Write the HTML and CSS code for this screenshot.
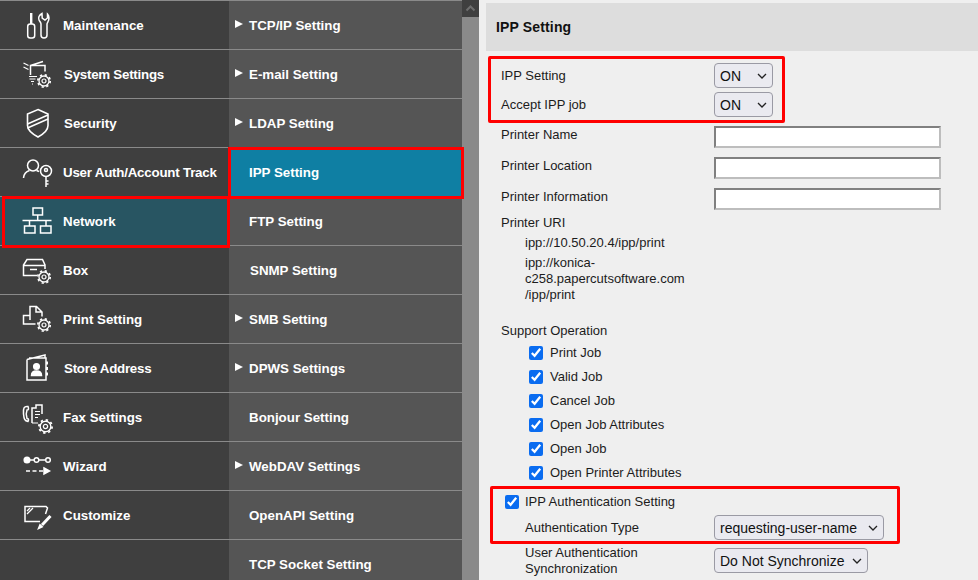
FILE: index.html
```html
<!DOCTYPE html>
<html lang="en">
<head>
<meta charset="utf-8">
<title>IPP Setting</title>
<link rel="stylesheet" href="styles.css">
</head>
<body>
<svg class="defs" width="0" height="0" aria-hidden="true">
  <symbol id="gear" viewBox="-8 -8 16 16">
    <circle r="5" fill="none" stroke="#fff" stroke-width="1.3"/>
    <circle r="6.2" fill="none" stroke="#fff" stroke-width="1.7" stroke-dasharray="2.2 2.67"/>
    <circle r="2" fill="none" stroke="#fff" stroke-width="1.2"/>
  </symbol>
</svg>
<div class="app">
  <nav class="menu">
    <a class="menu-item"><svg class="ico" viewBox="0 0 32 32"><rect x="5.700" y="15" width="7" height="14" rx="2.500"/><path d="M9.200 4v11" stroke-width="2.400"/><path d="M20 4.500C17 6 16 9 17 11c1 2 2 2.500 2 4v11a3 3 0 0 0 6 0V15c0-1.500 2-2.500 2-6 0-2-.5-3-1.500-4v4L23 11l-2.800-2z"/></svg><span>Maintenance</span></a>
    <a class="menu-item nudge"><svg class="ico" viewBox="0 0 32 32"><path d="M8.500 17V7.500H23v6M8.500 7.500L21 3.500"/><path d="M1.500 5l5 2.500M1.500 9l5 2.500" stroke-width="1.300"/><path d="M7 18.500h8M7.500 21h6M9 23.500h3M10 26h1" stroke-width="1.200"/><use href="#gear" x="14" y="15" width="16" height="16"/></svg><span class="tight">System Settings</span></a>
    <a class="menu-item nudge"><svg class="ico" viewBox="0 0 32 32"><path d="M16 2.500L26 7v11.500c0 4-4.500 8.500-10 11.500C10.500 27 5.500 22.500 5.500 18.500V7z" stroke-width="1.600"/><path d="M5.500 17L26 8M5.500 21L26 12" stroke-width="1.400"/></svg><span>Security</span></a>
    <a class="menu-item"><svg class="ico" viewBox="0 0 32 32"><circle cx="11" cy="9.500" r="5.500"/><path d="M1.500 22c.3-4 2.700-6.500 6-7.500M14.500 14.500c1 .3 1.800.7 2.500 1.200"/><circle cx="24" cy="15" r="5.500"/><circle cx="24" cy="14" r="1.500"/><path d="M24 20.500V31M24 25h2.500M24 28h2.500"/></svg><span class="tighter">User Auth/Account Track</span></a>
    <a class="menu-item active"><svg class="ico" viewBox="0 0 32 32"><rect x="11" y="3" width="9.500" height="7"/><path d="M15.700 10v5M.5 15.500h29M7.500 15.500V21M24 15.500V21"/><rect x="2.500" y="21" width="10.500" height="7"/><rect x="18.500" y="21" width="10.500" height="7"/></svg><span>Network</span></a>
    <a class="menu-item"><svg class="ico" viewBox="0 0 32 32"><path d="M15 21.500H1.500V11L5 5.500h15.500L23 11v4M1.500 11.500h21.500M8 15.500h7" stroke-width="1.500"/><use href="#gear" x="14" y="15" width="16" height="16"/></svg><span>Box</span></a>
    <a class="menu-item"><svg class="ico" viewBox="0 0 32 32"><path d="M8 17V3.500h6.500L20 9v4.500M14 3.500V9h6"/><path d="M8 12.500H1.500V21h12"/><use href="#gear" x="14" y="14" width="16" height="16"/></svg><span>Print Setting</span></a>
    <a class="menu-item nudge"><svg class="ico" viewBox="0 0 32 32"><path d="M5 7.500L23 3v3M5 7.500V28h19V6H7"/><circle cx="14.500" cy="14.500" r="2.800" fill="#fff"/><path d="M9.500 23.500c0-3.500 2-4.500 5-4.500s5 1 5 4.500z" fill="#fff"/><path d="M25 9.500v3M25 15v3M25 20.500v3" stroke-width="2"/></svg><span class="tight">Store Address</span></a>
    <a class="menu-item"><svg class="ico" viewBox="0 0 32 32"><path d="M6 5.500C2 5 1 7 1.500 13c.5 5 1 7 4.500 7.500 1-2 .5-3-1-3-1-3-1-6 0-8.500 1.500 0 2-1 1-3.500z"/><path d="M10 22V7h4V4h6v9"/><path d="M13 10.500h5M13 13.500h5M13 16.500h3M10 22h6" stroke-width="1.200"/><use href="#gear" x="15" y="17" width="17" height="17"/></svg><span>Fax Settings</span></a>
    <a class="menu-item"><svg class="ico" viewBox="0 0 32 32"><circle cx="5" cy="10" r="2.800" fill="#fff"/><circle cx="14.500" cy="10" r="2.300"/><circle cx="26" cy="10" r="2.300"/><path d="M8 10h4M17 10h6.500"/><path d="M4 21h22" stroke-dasharray="4 2.500"/><path d="M22 18l5.500 3-5.500 3z" fill="#fff"/></svg><span>Wizard</span></a>
    <a class="menu-item"><svg class="ico" viewBox="0 0 32 32"><path d="M18 22.500H3V7.500h21l1.500 1.500-2 6"/><path d="M5 15l6-6M5 12l3-3" stroke-width="1.300"/><path d="M20 26l8.500-9" stroke-width="3"/><path d="M16.500 29.500l1.500-3.800 2.200 2z" fill="#fff"/></svg><span>Customize</span></a>
  </nav>
  <ul class="submenu">
    <li class="sub-item arrow">TCP/IP Setting</li>
    <li class="sub-item arrow">E-mail Setting</li>
    <li class="sub-item arrow">LDAP Setting</li>
    <li class="sub-item active">IPP Setting</li>
    <li class="sub-item">FTP Setting</li>
    <li class="sub-item nudge">SNMP Setting</li>
    <li class="sub-item arrow">SMB Setting</li>
    <li class="sub-item arrow">DPWS Settings</li>
    <li class="sub-item">Bonjour Setting</li>
    <li class="sub-item arrow">WebDAV Settings</li>
    <li class="sub-item">OpenAPI Setting</li>
    <li class="sub-item">TCP Socket Setting</li>
  </ul>
  <div class="scrollbar">
    <div class="scroll-btn"><svg width="17" height="17" viewBox="0 0 17 17"><path d="M4.500 10.500L8.500 6.500l4 4" fill="none" stroke="#6e6e6e" stroke-width="2"/></svg></div>
  </div>
  <main class="content">
    <h1 class="title">IPP Setting</h1>
    <form class="form">
      <div class="row sel-row first"><label>IPP Setting</label><select class="sel-on"><option>ON</option></select></div>
      <div class="row sel-row second"><label>Accept IPP job</label><select class="sel-on"><option>ON</option></select></div>
      <div class="row txt-row"><label class="low">Printer Name</label><input class="txt" type="text"></div>
      <div class="row txt-row"><label class="low">Printer Location</label><input class="txt" type="text"></div>
      <div class="row txt-row"><label class="low">Printer Information</label><input class="txt" type="text"></div>
      <div class="uri">
        <div class="plain">Printer URI</div>
        <div class="uri-one">ipp://10.50.20.4/ipp/print</div>
        <div class="uri-two">ipp://konica-<br>c258.papercutsoftware.com<br>/ipp/print</div>
      </div>
      <div class="plain support">Support Operation</div>
      <label class="check"><input type="checkbox" checked>Print Job</label>
      <label class="check"><input type="checkbox" checked>Valid Job</label>
      <label class="check"><input type="checkbox" checked>Cancel Job</label>
      <label class="check"><input type="checkbox" checked>Open Job Attributes</label>
      <label class="check"><input type="checkbox" checked>Open Job</label>
      <label class="check"><input type="checkbox" checked>Open Printer Attributes</label>
      <label class="check auth"><input type="checkbox" checked>IPP Authentication Setting</label>
      <div class="row sub-row auth-type"><label>Authentication Type</label><select class="sel-auth"><option>requesting-user-name</option></select></div>
      <div class="row sub-row sync"><label>User Authentication<br>Synchronization</label><select class="sel-sync"><option>Do Not Synchronize</option></select></div>
    </form>
  </main>
</div>
<div class="mark mark-net"></div>
<div class="mark mark-ipp"></div>
<div class="mark mark-top"></div>
<div class="mark mark-auth"></div>
</body>
</html>
```

FILE: styles.css
```css
* { box-sizing: border-box; }
html, body { margin: 0; padding: 0; height: 580px; overflow: hidden; }
body { font-family: "Liberation Sans", Arial, sans-serif; position: relative; background: #efefef; color: #1c1c1c; }
.defs { position: absolute; }
.app { display: flex; height: 580px; overflow: hidden; }

.menu { width: 229px; flex: none; background: #3f3f3f; border-top: 1px solid #8a8a8a; }
.menu-item { display: flex; align-items: center; height: 49px; padding-left: 22px; gap: 9px; border-bottom: 1px solid #8a8a8a; color: #fff; font-weight: bold; font-size: 13.330px; white-space: nowrap; }
.menu-item.nudge span { margin-left: 1px; }
.menu-item.active { background: #285562; }
.tight { letter-spacing: -0.25px; }
.tighter { letter-spacing: -0.22px; }
.ico { width: 32px; height: 32px; flex: none; fill: none; stroke: #fff; stroke-width: 1.500; overflow: visible; }

.submenu { list-style: none; margin: 0; padding: 0; width: 233px; flex: none; background: #555; border-top: 1px solid #8a8a8a; height: 580px; overflow: hidden; }
.sub-item { display: flex; align-items: center; height: 49px; padding-left: 20px; border-bottom: 1px solid #8a8a8a; color: #fff; font-weight: bold; font-size: 13.330px; position: relative; white-space: nowrap; }
.sub-item.nudge { padding-left: 21px; }
.sub-item.active { background: #0f7fa3; }
.sub-item.arrow::before { content: ""; position: absolute; left: 6px; top: 19px; border-style: solid; border-width: 4px 0 4px 8px; border-color: transparent transparent transparent #fff; }

.scrollbar { width: 17px; flex: none; background: #8a8a8a; }
.scroll-btn { height: 17px; background: #3f3f3f; }

.content { flex: 1; min-width: 0; padding: 3px 0 0 7px; background: #efefef; }
.title { margin: 0; height: 48px; line-height: 48px; padding-left: 10px; background: #ddd; font-size: 14px; letter-spacing: 0.15px; font-weight: bold; color: #111; }
.form { padding-left: 15px; font-size: 13px; line-height: 16px; }
.row { display: grid; grid-template-columns: 213px auto; justify-content: start; }
.row label { line-height: 16px; }
.row .low { padding-top: 1px; }
.sel-row { align-items: center; height: 25px; }
.sel-row.first { margin-top: 12px; }
.sel-row.second { margin-top: 4px; margin-bottom: 9px; }
.txt-row { height: 22px; margin-bottom: 9px; }
select { appearance: none; height: 25px; font-family: "Liberation Sans", Arial, sans-serif; font-size: 14px; color: #111; padding: 0 0 0 5px; border: 1px solid #9a9aa4; border-radius: 4px; background-color: #eaeaf0; background-repeat: no-repeat; background-position: right 4px center; background-size: 12px 8px; background-image: url("data:image/svg+xml,%3Csvg xmlns='http://www.w3.org/2000/svg' width='12' height='8'%3E%3Cpath d='M2 2l4 4 4-4' fill='none' stroke='%23222' stroke-width='1.300'/%3E%3C/svg%3E"); }
.sel-on { width: 59px; }
.sel-auth { width: 170px; }
.sel-sync { width: 154px; }
.txt { width: 227px; height: 22px; border: 2px solid; border-color: #808080 #bdbdbd #bdbdbd #808080; background: #fff; padding: 0; }
.uri { margin-top: -4px; }
.plain { height: 16px; }
.uri-one { margin: 4px 0 0 24px; }
.uri-two { margin: 4px 0 0 24px; }
.support { margin-top: 20px; margin-bottom: 1px; }
.check { display: flex; align-items: center; height: 24px; padding-left: 28px; padding-top: 1px; }
.check input { width: 14px; height: 14px; margin: 0 7px 0 0; accent-color: #0a6cf0; }
.check.auth { margin-top: 5px; padding-left: 4px; }
.check.auth input { margin-right: 6px; }
.sub-row { padding-left: 24px; grid-template-columns: 189px auto; grid-template-rows: 25px; }
.auth-type { margin-top: 2px; height: 25px; align-items: center; }
.sync { margin-top: 8px; height: 25px; align-items: center; }

.mark { position: absolute; border: 3px solid #f00; pointer-events: none; }
.mark-net { left: 2px; top: 196px; width: 228px; height: 52px; }
.mark-ipp { left: 228px; top: 147px; width: 236px; height: 52px; }
.mark-top { left: 488px; top: 56px; width: 297px; height: 67px; border-radius: 2px; }
.mark-auth { left: 490px; top: 486px; width: 410px; height: 58px; border-radius: 2px; }
```
